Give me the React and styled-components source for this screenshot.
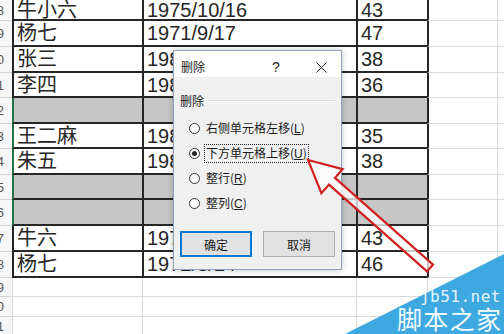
import React from 'react';
import styled, { createGlobalStyle } from 'styled-components';

const colors = {
  ink: '#262626',
  grid: '#dadada',
  selGray: '#c6c6c6',
  green: '#217346',
  dialog: '#f0f0f0',
  red: '#d11f1f',
  mark: '#3ea8e0',
};

const GlobalStyle = createGlobalStyle`
  html, body {
    margin: 0;
    padding: 0;
    background: #fff;
    overflow: hidden;
  }
`;

const Sheet = styled.div`
  position: relative;
  width: 504px;
  height: 334px;
  overflow: hidden;
  background: #fff;
  font-family: "Liberation Sans", "Noto Sans CJK SC", sans-serif;
`;

const Row = styled.div`
  display: grid;
  grid-template-columns: 12px 130px 214px 71px 70px 1fr;
  height: ${(p) => p.$h}px;
`;

const RowHead = styled.div`
  box-sizing: border-box;
  display: flex;
  align-items: center;
  justify-content: flex-end;
  padding-right: 8px;
  overflow: hidden;
  background: #f6f6f6;
  border-bottom: 1px solid #d4d4d4;
  font-size: 13px;
  color: #555;
`;

const lineFor = (kind) => {
  if (kind === 'dark') return `2px solid ${colors.ink}`;
  if (kind === 'green') return `2px solid ${colors.green}`;
  return `1px solid ${colors.grid}`;
};

const Cell = styled.div`
  box-sizing: border-box;
  display: flex;
  align-items: center;
  padding-left: 3px;
  overflow: hidden;
  white-space: nowrap;
  background: ${(p) => (p.$gray ? colors.selGray : '#fff')};
  border-left: ${(p) => lineFor(p.$left)};
  border-bottom: ${(p) => lineFor(p.$bottom)};
  font-size: 20px;
  line-height: 1;
  color: ${colors.ink};
`;

const Dialog = styled.div`
  position: absolute;
  left: 173px;
  top: 50px;
  width: 169px;
  height: 220px;
  box-sizing: border-box;
  border: 1px solid #8ea4bf;
  background: ${colors.dialog};
  box-shadow: 0 0 6px rgba(0, 0, 0, 0.25);
  display: flex;
  flex-direction: column;
  font-family: "Noto Sans CJK SC", sans-serif;
  color: #1a1a1a;
`;

const TitleBar = styled.div`
  height: 26px;
  background: #fff;
  display: flex;
  align-items: flex-end;
  padding-bottom: 3px;
  box-sizing: border-box;
`;

const Title = styled.div`
  flex: 1;
  padding-left: 7px;
  font-size: 12px;
  line-height: 14px;
`;

const Help = styled.div`
  width: 20px;
  text-align: center;
  font-family: "Liberation Sans", sans-serif;
  font-size: 14px;
  line-height: 14px;
  margin-right: 15px;
`;

const Close = styled.div`
  width: 40px;
  height: 14px;
  display: flex;
  align-items: center;
  justify-content: center;
`;

const Body = styled.div`
  flex: 1;
  display: flex;
  flex-direction: column;
  padding: 17px 6px 12px 6px;
`;

const GroupLabel = styled.div`
  display: flex;
  align-items: center;
  gap: 4px;
  font-size: 12px;
  line-height: 14px;
  &::after {
    content: '';
    flex: 1;
    border-top: 1px solid #dcdcdc;
    border-bottom: 1px solid #fff;
  }
`;

const Options = styled.div`
  display: flex;
  flex-direction: column;
  gap: 3px;
  margin-top: 9px;
  padding-left: 9px;
`;

const Option = styled.div`
  height: 22px;
  display: flex;
  align-items: center;
  gap: 4px;
  font-size: 12px;
  line-height: 14px;
`;

const Radio = styled.span`
  width: 11px;
  height: 11px;
  box-sizing: border-box;
  border-radius: 50%;
  border: 1px solid #333;
  background: #fff;
  display: flex;
  align-items: center;
  justify-content: center;
  &::after {
    content: '';
    width: 5px;
    height: 5px;
    border-radius: 50%;
    background: ${(p) => (p.$on ? '#222' : 'transparent')};
  }
`;

const Label = styled.span`
  padding: 1px 1px;
  border: 1px dotted ${(p) => (p.$focus ? '#222' : 'transparent')};
  font-family: "Noto Sans CJK SC", sans-serif;
  u {
    font-family: "Liberation Sans", sans-serif;
  }
`;

const Buttons = styled.div`
  margin-top: auto;
  display: flex;
  justify-content: space-between;
`;

const Button = styled.button`
  width: 72px;
  height: 26px;
  box-sizing: border-box;
  border: 1px solid ${(p) => (p.$primary ? '#0078d7' : '#adadad')};
  box-shadow: ${(p) => (p.$primary ? 'inset 0 0 0 1px #0078d7' : 'none')};
  background: #e1e1e1;
  font-family: "Noto Sans CJK SC", sans-serif;
  font-size: 12px;
  color: #1a1a1a;
  padding: 0;
`;

const Overlay = styled.svg`
  position: absolute;
  left: 0;
  top: 0;
  pointer-events: none;
`;

const Watermark = styled.div`
  position: absolute;
  right: 0;
  bottom: 0;
  width: 160px;
  height: 82px;
  display: flex;
  flex-direction: column;
  align-items: flex-end;
  justify-content: flex-end;
  padding: 0 3px 3px 0;
  box-sizing: border-box;
`;

const MarkBg = styled.svg`
  position: absolute;
  inset: 0;
`;

const MarkUrl = styled.div`
  position: relative;
  font-family: "DejaVu Sans Mono", monospace;
  font-size: 16px;
  line-height: 17px;
  letter-spacing: 0.5px;
  color: #e4f5fd;
`;

const MarkName = styled.div`
  position: relative;
  width: 104px;
  display: flex;
  justify-content: space-between;
  font-family: "Noto Sans CJK SC", sans-serif;
  font-size: 25px;
  line-height: 26px;
  color: #f2fbff;
`;

const rows = [
  { n: 8, name: '牛小六', date: '1975/10/16', age: '43', h: 21 },
  { n: 9, name: '杨七', date: '1971/9/17', age: '47', h: 26 },
  { n: 10, name: '张三', date: '1982/5/12', age: '38', h: 26 },
  { n: 11, name: '李四', date: '1984/8/20', age: '36', h: 25 },
  { n: 12, gray: true, sel: true, h: 26 },
  { n: 13, name: '王二麻', date: '1985/3/9', age: '35', sel: true, h: 25 },
  { n: 14, name: '朱五', date: '1982/7/15', age: '38', sel: true, h: 26 },
  { n: 15, gray: true, sel: true, h: 25 },
  { n: 16, gray: true, sel: true, h: 26 },
  { n: 17, name: '牛六', date: '1975/8/13', age: '43', h: 26 },
  { n: 18, name: '杨七', date: '1972/3/14', age: '46', h: 26 },
  { n: 19, empty: true, h: 19 },
  { n: 20, empty: true, h: 20 },
  { n: 21, empty: true, h: 20 },
];

const options = [
  { text: '右侧单元格左移', key: 'L' },
  { text: '下方单元格上移', key: 'U', on: true },
  { text: '整行', key: 'R' },
  { text: '整列', key: 'C' },
];

function SheetRow({ r }) {
  if (r.empty) {
    return (
      <Row $h={r.h}>
        <RowHead>{r.n}</RowHead>
        <Cell $left="light" $bottom="light" />
        <Cell $left="light" $bottom="light" />
        <Cell $left="light" $bottom="light" />
        <Cell $left="light" $bottom="light" />
        <Cell $left="light" $bottom="light" />
      </Row>
    );
  }
  return (
    <Row $h={r.h}>
      <RowHead>{r.n}</RowHead>
      <Cell $left={r.sel ? 'green' : 'dark'} $bottom="dark" $gray={r.gray}>
        {r.name}
      </Cell>
      <Cell $left="dark" $bottom="dark" $gray={r.gray}>
        {r.date}
      </Cell>
      <Cell $left="dark" $bottom="dark" $gray={r.gray}>
        {r.age}
      </Cell>
      <Cell $left="dark" $bottom="light" />
      <Cell $left="light" $bottom="light" />
    </Row>
  );
}

export default function App() {
  return (
    <Sheet>
      <GlobalStyle />
      {rows.map((r) => (
        <SheetRow key={r.n} r={r} />
      ))}

      <Dialog>
        <TitleBar>
          <Title>删除</Title>
          <Help>?</Help>
          <Close>
            <svg width="11" height="11" viewBox="0 0 11 11">
              <path d="M0.5 0.5 L10.5 10.5 M10.5 0.5 L0.5 10.5" stroke="#222" strokeWidth="1" />
            </svg>
          </Close>
        </TitleBar>
        <Body>
          <GroupLabel>删除</GroupLabel>
          <Options>
            {options.map((o) => (
              <Option key={o.key}>
                <Radio $on={o.on} />
                <Label $focus={o.on}>
                  {o.text}(<u>{o.key}</u>)
                </Label>
              </Option>
            ))}
          </Options>
          <Buttons>
            <Button $primary>确定</Button>
            <Button>取消</Button>
          </Buttons>
        </Body>
      </Dialog>

      <Overlay width="504" height="334" viewBox="0 0 504 334">
        <polygon
          points="308,160 342.6,169.2 335,177.8 433,264.6 427,271.4 329,184.6 321.4,193.2"
          fill="#fff"
          fillOpacity="0.75"
          stroke={colors.red}
          strokeWidth="2.2"
          strokeLinejoin="miter"
        />
      </Overlay>

      <Watermark>
        <MarkBg width="160" height="82" viewBox="0 0 160 82">
          <polygon points="1,82 160,2 160,82" fill={colors.mark} />
        </MarkBg>
        <MarkUrl>jb51.net</MarkUrl>
        <MarkName>
          {'脚本之家'.split('').map((ch) => (
            <span key={ch}>{ch}</span>
          ))}
        </MarkName>
      </Watermark>
    </Sheet>
  );
}
